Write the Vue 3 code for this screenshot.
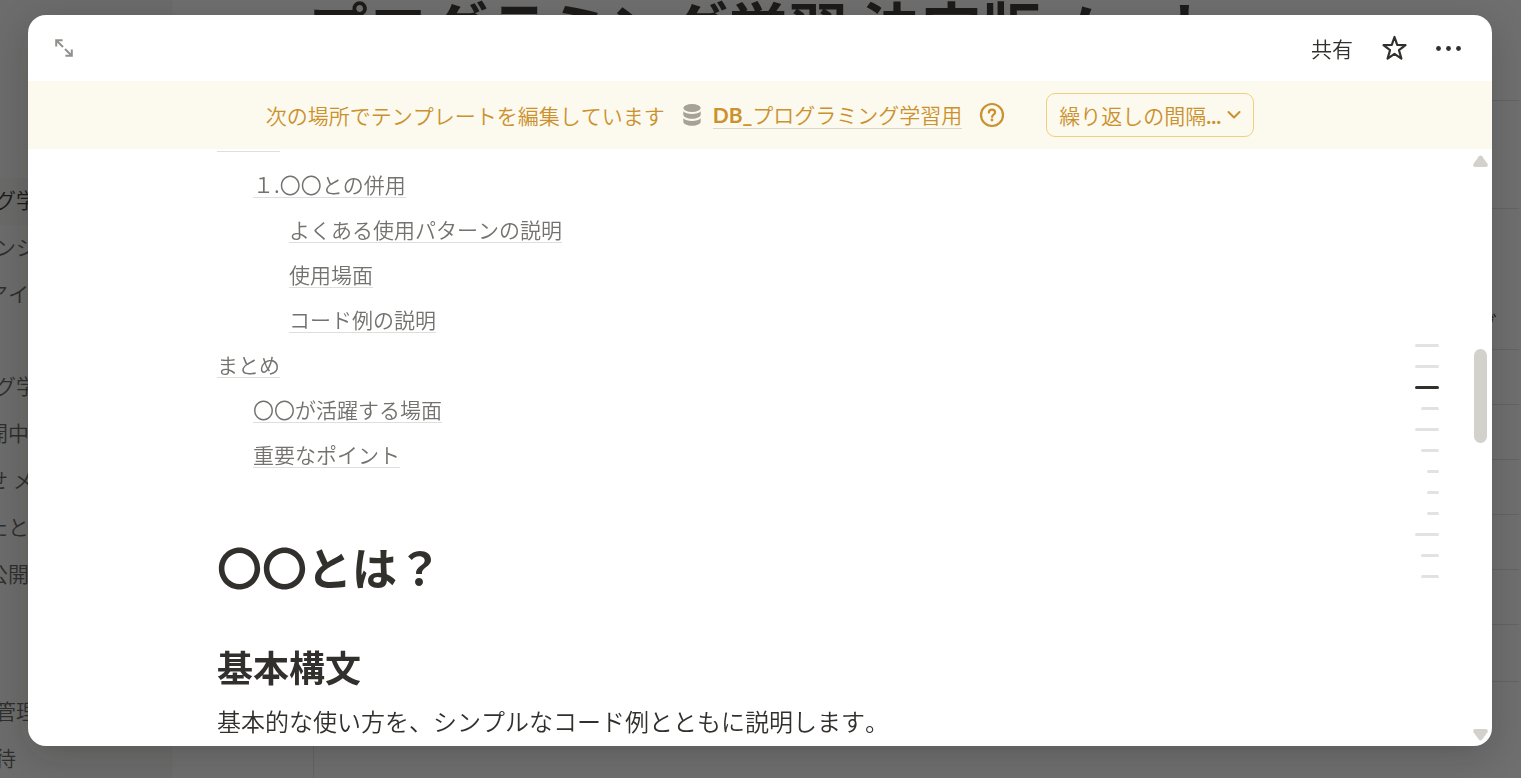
<template>
  <div class="page">
    <aside class="sidebar">
      <ul v-for="(group, i) in sidebarGroups" :key="i" class="sidebar-group">
        <li
          v-for="item in group"
          :key="item.label"
          :class="['sidebar-item', { active: item.active, nested: item.nested }]"
        >
          {{ item.label }}
        </li>
      </ul>
    </aside>

    <main class="main">
      <h1 class="page-title">プログラミング学習 決定版ノート</h1>
      <div class="block block-intro"></div>
      <div class="block block-head">グ</div>
      <div v-for="n in 6" :key="n" class="block block-row"></div>
      <div class="block-rest"></div>
    </main>
  </div>

  <div class="overlay">
    <section class="modal" role="dialog" aria-label="テンプレート">
      <header class="modal-header">
        <button class="icon-btn expand-btn" aria-label="全画面で開く">
          <svg width="20" height="20" viewBox="0 0 20 20" fill="none" stroke="#91918e" stroke-width="2">
            <path d="M2.2 8.4V2.2H8.6M2.2 2.2L9 9M17.8 11.6v6.2h-6.400M17.8 17.8L11 11" />
          </svg>
        </button>
        <div class="header-actions">
          <button class="share-btn">共有</button>
          <button class="icon-btn" aria-label="お気に入り">
            <svg width="26" height="26" viewBox="0 0 26 26" fill="none" stroke="#32302c" stroke-width="2.2" stroke-linejoin="round">
              <path d="M13.500 2L16.200 9.800L24.500 10.200L18 15.200L20.400 23.600L13.500 18.800L6.600 23.600L9 15.200L2.500 10.200L10.8 9.800Z" />
            </svg>
          </button>
          <button class="icon-btn" aria-label="その他">
            <svg width="26" height="26" viewBox="0 0 26 26" fill="#32302c">
              <circle cx="3.500" cy="13.500" r="2.4" />
              <circle cx="13.500" cy="13.500" r="2.4" />
              <circle cx="23.500" cy="13.500" r="2.4" />
            </svg>
          </button>
        </div>
      </header>

      <div class="banner">
        <span>次の場所でテンプレートを編集しています</span>
        <svg class="db-icon" width="18" height="24" viewBox="0 0 18 24" fill="#a6a299">
          <ellipse cx="9" cy="5" rx="8.7" ry="4" />
          <path d="M.3 8.2C2 10 5 11 9 11s7-1 8.700-2.800v3.600c0 2.200-3.900 4-8.700 4s-8.700-1.800-8.700-4z" />
          <path d="M.3 15.200C2 17 5 18 9 18s7-1 8.700-2.800v3.600c0 2.200-3.900 4-8.700 4s-8.700-1.800-8.700-4z" />
        </svg>
        <a href="#" class="db-link"><b>DB_</b>プログラミング学習用</a>
        <button class="icon-btn help-btn" aria-label="ヘルプ">
          <svg width="26" height="26" viewBox="0 0 26 26" fill="none" stroke="#cb912f" stroke-width="2.2">
            <circle cx="13" cy="13" r="11" />
            <path d="M9.900 10.600c0-1.900 1.300-3 3.100-3s3.100 1.100 3.100 2.700c0 2.300-3 2.300-3 4.600" stroke-linecap="round" />
            <circle cx="13" cy="18" r="1.400" fill="#cb912f" stroke="none" />
          </svg>
        </button>
        <button class="repeat-btn">
          <span>繰り返しの間隔<b>...</b></span>
          <svg width="14" height="10" viewBox="0 0 14 10" fill="none" stroke="#cb912f" stroke-width="2" stroke-linecap="round" stroke-linejoin="round">
            <path d="M1.500 2L7 7.500L12.500 2" />
          </svg>
        </button>
      </div>

      <div class="modal-body">
        <article class="document">
          <nav class="toc">
            <span class="toc-cut"></span>
            <a
              v-for="item in tocItems"
              :key="item.label"
              href="#"
              :class="['toc-item', 'level-' + item.level]"
            ><span>{{ item.label }}</span></a>
          </nav>
          <h2 class="heading-1">〇〇とは？</h2>
          <h3 class="heading-2">基本構文</h3>
          <p class="paragraph">基本的な使い方を、シンプルなコード例とともに説明します。</p>
        </article>

        <div class="outline">
          <span
            v-for="(bar, i) in outlineBars"
            :key="i"
            :class="['outline-bar', 'depth-' + bar, { current: i === currentBar }]"
          ></span>
        </div>

        <div class="scrollbar">
          <svg width="15" height="12" viewBox="0 0 15 12" fill="#d3d1cb">
            <path d="M6 1.200Q7.500-.4 9 1.200L14.500 8.800Q15.400 11.600 13 12H2Q-.4 11.600.5 8.800Z" />
          </svg>
          <div class="scroll-track">
            <div class="scroll-thumb"></div>
          </div>
          <svg width="15" height="12" viewBox="0 0 15 12" fill="#d3d1cb">
            <path d="M6 10.800Q7.500 12.400 9 10.800L14.500 3.200Q15.400.4 13 0H2Q-.4.4.5 3.200Z" />
          </svg>
        </div>
      </div>
    </section>
  </div>
</template>

<script setup>
import { ref } from 'vue';

const sidebarGroups = [
  [
    { label: 'グ学習', active: true },
    { label: 'ンジ' },
    { label: 'アイ', nested: true }
  ],
  [
    { label: 'グ学習' },
    { label: '開中', nested: true },
    { label: 'せ メ', nested: true },
    { label: 'たと', nested: true },
    { label: '公開', nested: true }
  ],
  [
    { label: '管理' },
    { label: '待' }
  ]
];

const tocItems = [
  { label: '１.〇〇との併用', level: 2 },
  { label: 'よくある使用パターンの説明', level: 3 },
  { label: '使用場面', level: 3 },
  { label: 'コード例の説明', level: 3 },
  { label: 'まとめ', level: 1 },
  { label: '〇〇が活躍する場面', level: 2 },
  { label: '重要なポイント', level: 2 }
];

// 見出しの深さ
const outlineBars = [1, 1, 1, 2, 1, 2, 3, 3, 3, 1, 2, 2];
const currentBar = ref(2);
</script>

<style>
body {
  margin: 0;
  overflow: hidden;
}
</style>

<style scoped>
.page,
.overlay {
  font-family: "Noto Sans CJK JP", sans-serif;
  font-weight: 350;
  font-kerning: none;
  color: #32302c;
}

button {
  font-family: inherit;
  font-weight: inherit;
  font-kerning: inherit;
  background: none;
  border: none;
  padding: 0;
  cursor: pointer;
}

/* 背景のページ */
.page {
  display: flex;
  height: 100vh;
  overflow: hidden;
  background: #fff;
}

.sidebar {
  box-sizing: border-box;
  flex: 0 0 172px;
  padding-top: 178px;
  background: #f8f8f7;
  border-right: 1px solid #f1f1ef;
  overflow: hidden;
}

.sidebar-group {
  list-style: none;
  margin: 0 0 45px;
  padding: 0;
}

.sidebar-group:nth-child(2) {
  margin-bottom: 90px;
}

.sidebar-item {
  height: 47px;
  line-height: 42px;
  font-size: 21px;
  color: #5f5e5b;
  white-space: nowrap;
  text-indent: -5px;
}

.sidebar-item.nested {
  text-indent: -13px;
}

.sidebar-item.active {
  background: #f1f1ef;
  color: #32302c;
}

.main {
  flex: 1;
  display: flex;
  flex-direction: column;
  padding: 0 2px 0 136px;
  overflow: hidden;
}

.page-title {
  margin: 0;
  height: 100px;
  line-height: 54px;
  font-size: 60px;
  font-weight: 700;
  white-space: nowrap;
  border-bottom: 1px solid #e3e2e0;
}

.block {
  box-sizing: border-box;
  flex: none;
  border-bottom: 1px solid #e3e2e0;
}

.block-intro {
  height: 108px;
}

.block-head {
  height: 141px;
  padding: 96px 22px 0 0;
  line-height: 34px;
  font-size: 22px;
  text-align: right;
}

.block-row {
  height: 55px;
}

.block-row:nth-last-child(2) {
  height: 57px;
}

.block-rest {
  flex: 1;
  margin-left: 5px;
  border-left: 1px solid #e3e2e0;
}

/* モーダル */
.overlay {
  position: fixed;
  inset: 0;
  box-sizing: border-box;
  display: flex;
  padding: 15px 29px 32px 28px;
  background: rgba(15, 15, 15, 0.6);
}

.modal {
  flex: 1;
  min-width: 0;
  display: flex;
  flex-direction: column;
  background: #fff;
  border-radius: 18px;
  overflow: hidden;
  box-shadow: 0 10px 36px rgba(15, 15, 15, 0.2);
}

.modal-header {
  flex: none;
  height: 66px;
  display: flex;
  align-items: center;
  justify-content: space-between;
  padding: 0 31px 0 26px;
}

.icon-btn {
  display: flex;
}

.header-actions {
  display: flex;
  align-items: center;
  gap: 28px;
}

.share-btn {
  font-size: 21px;
  line-height: 30px;
  color: #32302c;
}

.banner {
  flex: none;
  height: 68px;
  display: flex;
  align-items: center;
  justify-content: center;
  font-size: 21px;
  line-height: 26px;
  color: #cb912f;
  background: #fcfaee;
  white-space: nowrap;
}

.banner b {
  font-family: Lato, sans-serif;
  font-weight: 700;
}

.db-icon {
  margin: 0 12px 0 18px;
}

.db-link {
  color: inherit;
  text-decoration: none;
  border-bottom: 1px solid #dad7cb;
}

.help-btn {
  margin: 0 41px 0 17px;
}

.repeat-btn {
  box-sizing: border-box;
  height: 44px;
  display: flex;
  align-items: center;
  gap: 6px;
  padding: 0 12px;
  border: 1px solid #f0d080;
  border-radius: 9px;
  font-size: 21px;
  color: #cb912f;
}

.modal-body {
  flex: 1;
  min-height: 0;
  display: flex;
}

.document {
  flex: 1;
  min-width: 0;
  padding-left: 189px;
  overflow: hidden;
}

.toc {
  display: flex;
  flex-direction: column;
}

.toc-cut {
  width: 63px;
  height: 2px;
  margin-bottom: 10px;
  border-bottom: 1px solid #dededc;
}

.toc-item {
  display: flex;
  align-items: center;
  height: 45px;
  font-size: 21px;
  line-height: 26px;
  color: #73726e;
  text-decoration: none;
}

.toc-item span {
  border-bottom: 1px solid #dededc;
}

.level-2 {
  padding-left: 36px;
}

.level-3 {
  padding-left: 72px;
}

.heading-1 {
  margin: 60px 0 0;
  font-size: 45px;
  line-height: 60px;
  font-weight: 700;
}

.heading-2 {
  margin: 45px 0 0;
  font-size: 36px;
  line-height: 48px;
  font-weight: 700;
}

.paragraph {
  margin: 13px 0 0;
  font-size: 24px;
  line-height: 36px;
  white-space: nowrap;
}

.outline {
  flex: none;
  display: flex;
  flex-direction: column;
  justify-content: center;
  align-items: flex-end;
  gap: 18px;
  padding-top: 27px;
}

.outline-bar {
  height: 3px;
  border-radius: 2px;
  background: #e3e2e0;
}

.depth-1 {
  width: 24px;
}

.depth-2 {
  width: 18px;
}

.depth-3 {
  width: 12px;
}

.outline-bar.current {
  background: #32302c;
}

.scrollbar {
  flex: none;
  display: flex;
  flex-direction: column;
  align-items: center;
  padding: 6px 4px 5px 34px;
}

.scroll-track {
  flex: 1;
  display: flex;
  padding-top: 182px;
}

.scroll-thumb {
  width: 13px;
  height: 94px;
  border-radius: 7px;
  background: #d3d1cb;
}
</style>
